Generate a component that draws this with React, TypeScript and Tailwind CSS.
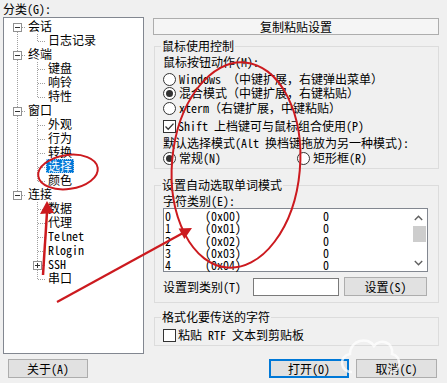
import React from 'react';

const FONT = "font-['Noto_Sans_Mono_CJK_SC','Noto_Sans_CJK_SC',sans-serif]";

type Node = {
  t: string;
  lv: 0 | 1;
  first?: boolean;
  lastRoot?: boolean;
  last?: boolean;
  under?: boolean;
  plus?: boolean;
  sel?: boolean;
};

const tree: Node[] = [
  { t: '会话', lv: 0, first: true },
  { t: '日志记录', lv: 1, last: true },
  { t: '终端', lv: 0 },
  { t: '键盘', lv: 1 },
  { t: '响铃', lv: 1 },
  { t: '特性', lv: 1, last: true },
  { t: '窗口', lv: 0 },
  { t: '外观', lv: 1 },
  { t: '行为', lv: 1 },
  { t: '转换', lv: 1 },
  { t: '选择', lv: 1, sel: true },
  { t: '颜色', lv: 1, last: true },
  { t: '连接', lv: 0, lastRoot: true },
  { t: '数据', lv: 1, under: true },
  { t: '代理', lv: 1, under: true },
  { t: 'Telnet', lv: 1, under: true },
  { t: 'Rlogin', lv: 1, under: true },
  { t: 'SSH', lv: 1, under: true, plus: true },
  { t: '串口', lv: 1, under: true, last: true },
];

const dot = { stroke: '#a0a0a0', strokeWidth: 1, strokeDasharray: '1 1' };

function ExpBox({ plus }: { plus?: boolean }) {
  return (
    <g>
      <rect x="7.5" y="3.5" width="8" height="8" fill="#ffffff" stroke="#919191" />
      <line x1="9" x2="14" y1="7.5" y2="7.5" stroke="#333333" />
      {plus && <line x1="11.5" x2="11.5" y1="5" y2="10" stroke="#333333" />}
    </g>
  );
}

function TreeRow({ n }: { n: Node }) {
  return (
    <div className="flex h-[14px] items-center">
      {n.lv === 0 ? (
        <svg width="20" height="14" className="shrink-0">
          {!n.first && <line x1="11.5" x2="11.5" y1="0" y2="3" {...dot} />}
          {!n.lastRoot && <line x1="11.5" x2="11.5" y1="12" y2="14" {...dot} />}
          <line x1="16" x2="20" y1="7.5" y2="7.5" {...dot} />
          <ExpBox />
        </svg>
      ) : (
        <>
          <svg width="20" height="14" className="shrink-0">
            {!n.under && <line x1="11.5" x2="11.5" y1="0" y2="14" {...dot} />}
          </svg>
          <svg width="20" height="14" className="shrink-0">
            <line x1="11.5" x2="11.5" y1="0" y2={n.last ? 8 : 14} {...dot} />
            <line x1="12" x2="20" y1="7.5" y2="7.5" {...dot} />
            {n.plus && <ExpBox plus />}
          </svg>
        </>
      )}
      <span
        className={
          n.sel
            ? 'mb-[3px] bg-[#0078d7] px-[2px] leading-[14px] text-white outline-1 outline-dotted -outline-offset-1 outline-[#9cc8ee]'
            : 'mb-[3px] px-[2px] leading-[14px]'
        }
      >
        {n.t}
      </span>
    </div>
  );
}

function Radio({ checked }: { checked?: boolean }) {
  return (
    <svg width="13" height="13" viewBox="0 0 13 13" className="shrink-0">
      <circle cx="6.5" cy="6.5" r="6" fill="#ffffff" stroke="#333333" />
      {checked && <circle cx="6.5" cy="6.5" r="3.5" fill="#333333" />}
    </svg>
  );
}

function Check({ checked }: { checked?: boolean }) {
  return (
    <svg width="13" height="13" viewBox="0 0 13 13" className="shrink-0">
      <rect x="0.5" y="0.5" width="12" height="12" fill="#ffffff" stroke="#333333" />
      {checked && (
        <path d="M2.5 6.5 L5.2 9.2 L10.5 3.6" fill="none" stroke="#333333" strokeWidth="1.3" />
      )}
    </svg>
  );
}

function Group({
  title,
  className,
  children,
}: {
  title: string;
  className: string;
  children: React.ReactNode;
}) {
  return (
    <fieldset className={`ml-[1px] w-[285px] border border-[#dcdcdc] px-[8px] ${className}`}>
      <legend className="-ml-[2px] px-[1px] leading-[14px]">{title}</legend>
      {children}
    </fieldset>
  );
}

const listRows = [
  ['0', '(0x00)', '0'],
  ['1', '(0x01)', '0'],
  ['2', '(0x02)', '0'],
  ['3', '(0x03)', '0'],
  ['4', '(0x04)', '0'],
];

export default function App() {
  return (
    <div
      className={`relative flex h-[383px] w-[447px] flex-col overflow-hidden bg-[#f0f0f0] text-[12px] text-black ${FONT}`}
    >
      <div className="flex h-[359px]">
        {/* left column */}
        <div className="flex w-[153px] flex-col pl-[3px] pt-[1px]">
          <div className="h-[16px] leading-[16px]">分类(G):</div>
          <div className="h-[337px] w-[141px] border border-[#828790] bg-white pl-[2px] pt-[2px]">
            {tree.map((n) => (
              <TreeRow key={n.t} n={n} />
            ))}
          </div>
        </div>

        {/* right column */}
        <div className="flex flex-col pt-[18px]">
          <div className="flex h-[17px] w-[286px] items-center justify-center border border-[#adadad] bg-[#f5f5f5] leading-[14px]">
            复制粘贴设置
          </div>

          <Group title="鼠标使用控制" className="mt-[4px] pb-[3px]">
            <div className="mt-[2px] flex h-[14px] items-center leading-[14px]">鼠标按钮动作(M):</div>
            <div className="mt-[3px] flex h-[14px] items-center gap-[3px] leading-[14px]">
              <Radio />
              <span>Windows （中键扩展，右键弹出菜单）</span>
            </div>
            <div className="flex h-[14px] items-center gap-[3px] leading-[14px]">
              <Radio checked />
              <span>混合模式（中键扩展，右键粘贴）</span>
            </div>
            <div className="mt-[1px] flex h-[14px] items-center gap-[3px] leading-[14px]">
              <Radio />
              <span>xterm（右键扩展，中键粘贴）</span>
            </div>
            <div className="mt-[4px] flex h-[14px] items-center gap-[2px] leading-[14px]">
              <Check checked />
              <span>Shift 上档键可与鼠标组合使用(P)</span>
            </div>
            <div className="mt-[3px] flex h-[14px] items-center leading-[14px]">
              默认选择模式(Alt 换档键拖放为另一种模式):
            </div>
            <div className="mt-[1px] flex h-[14px] items-center leading-[14px]">
              <div className="flex w-[134px] items-center gap-[3px]">
                <Radio checked />
                <span>常规(N)</span>
              </div>
              <div className="flex items-center gap-[3px]">
                <Radio />
                <span>矩形框(R)</span>
              </div>
            </div>
          </Group>

          <Group title="设置自动选取单词模式" className="mt-[9px] pb-[6px]">
            <div className="mt-[2px] flex h-[14px] items-center leading-[14px]">字符类别(E):</div>
            <div className="flex h-[64px] w-[265px] border border-[#828790] bg-white">
              <div className="flex flex-1 flex-col pl-[1px] pt-[1px]">
                {listRows.map((r) => (
                  <div key={r[0]} className="flex h-[12.4px] items-center leading-[12px]">
                    <span className="w-[40px]">{r[0]}</span>
                    <span className="w-[118px]">{r[1]}</span>
                    <span>{r[2]}</span>
                  </div>
                ))}
              </div>
              <div className="flex w-[17px] flex-col items-center">
                <div className="flex h-[17px] items-center justify-center">
                  <svg width="9" height="6" viewBox="0 0 9 6">
                    <path d="M0.8 5 L4.5 1.3 L8.2 5" fill="none" stroke="#606060" strokeWidth="1.4" />
                  </svg>
                </div>
                <div className="ml-[1px] h-[16px] w-[13px] bg-[#cdcdcd]" />
                <div className="flex-1" />
                <div className="flex h-[17px] items-center justify-center">
                  <svg width="9" height="6" viewBox="0 0 9 6">
                    <path d="M0.8 1 L4.5 4.7 L8.2 1" fill="none" stroke="#606060" strokeWidth="1.4" />
                  </svg>
                </div>
              </div>
            </div>
            <div className="mt-[5px] flex h-[19px] items-center leading-[14px]">
              <span className="w-[90px]">设置到类别(T)</span>
              <div className="h-[18px] w-[86px] border border-[#7a7a7a] bg-white" />
              <div className="ml-[5px] flex h-[19px] w-[83px] items-center justify-center border border-[#adadad] bg-[#e1e1e1]">
                设置(S)
              </div>
            </div>
          </Group>

          <Group title="格式化要传送的字符" className="mt-[7px] pb-[3px]">
            <div className="mt-[4px] flex h-[14px] items-center gap-[2px] leading-[14px]">
              <Check />
              <span>粘贴 RTF 文本到剪贴板</span>
            </div>
          </Group>
        </div>
      </div>

      {/* bottom buttons */}
      <div className="flex h-[19px] leading-[14px]">
        <div className="ml-[8px] flex w-[80px] items-center justify-center border border-[#adadad] bg-[#e1e1e1]">
          关于(A)
        </div>
        <div className="ml-[181px] flex w-[80px] items-center justify-center border-2 border-[#0078d7] bg-[#e1e1e1]">
          打开(O)
        </div>
        <div className="ml-[7px] flex w-[81px] items-center justify-center border border-[#adadad] bg-[#e1e1e1]">
          取消(C)
        </div>
      </div>

      {/* red hand-drawn annotations and faint watermark */}
      <svg
        className="pointer-events-none absolute left-0 top-0"
        width="447"
        height="383"
        viewBox="0 0 447 383"
      >
        <g fill="none" stroke="#ffffff" strokeWidth="2.5" opacity="0.75">
          <path d="M352 372 C340 372 338 356 350 354 C350 340 368 336 374 346 C380 338 394 342 392 354 C402 356 402 372 390 372" />
        </g>
        <g fill="none" stroke="#cc1a1f" strokeWidth="2">
          <ellipse cx="236" cy="165" rx="64" ry="103" transform="rotate(5 236 165)" />
          <ellipse cx="68" cy="172" rx="30" ry="17" transform="rotate(-8 68 172)" />
          <line x1="43" y1="275" x2="47" y2="212" strokeWidth="2.5" />
          <line x1="57" y1="302" x2="183" y2="233" strokeWidth="2.2" />
        </g>
        <g fill="#cc1a1f">
          <polygon points="47,201 40,214 54,213" />
          <polygon points="192,228 178.6,228.5 184.4,239.1" />
        </g>
      </svg>
    </div>
  );
}
